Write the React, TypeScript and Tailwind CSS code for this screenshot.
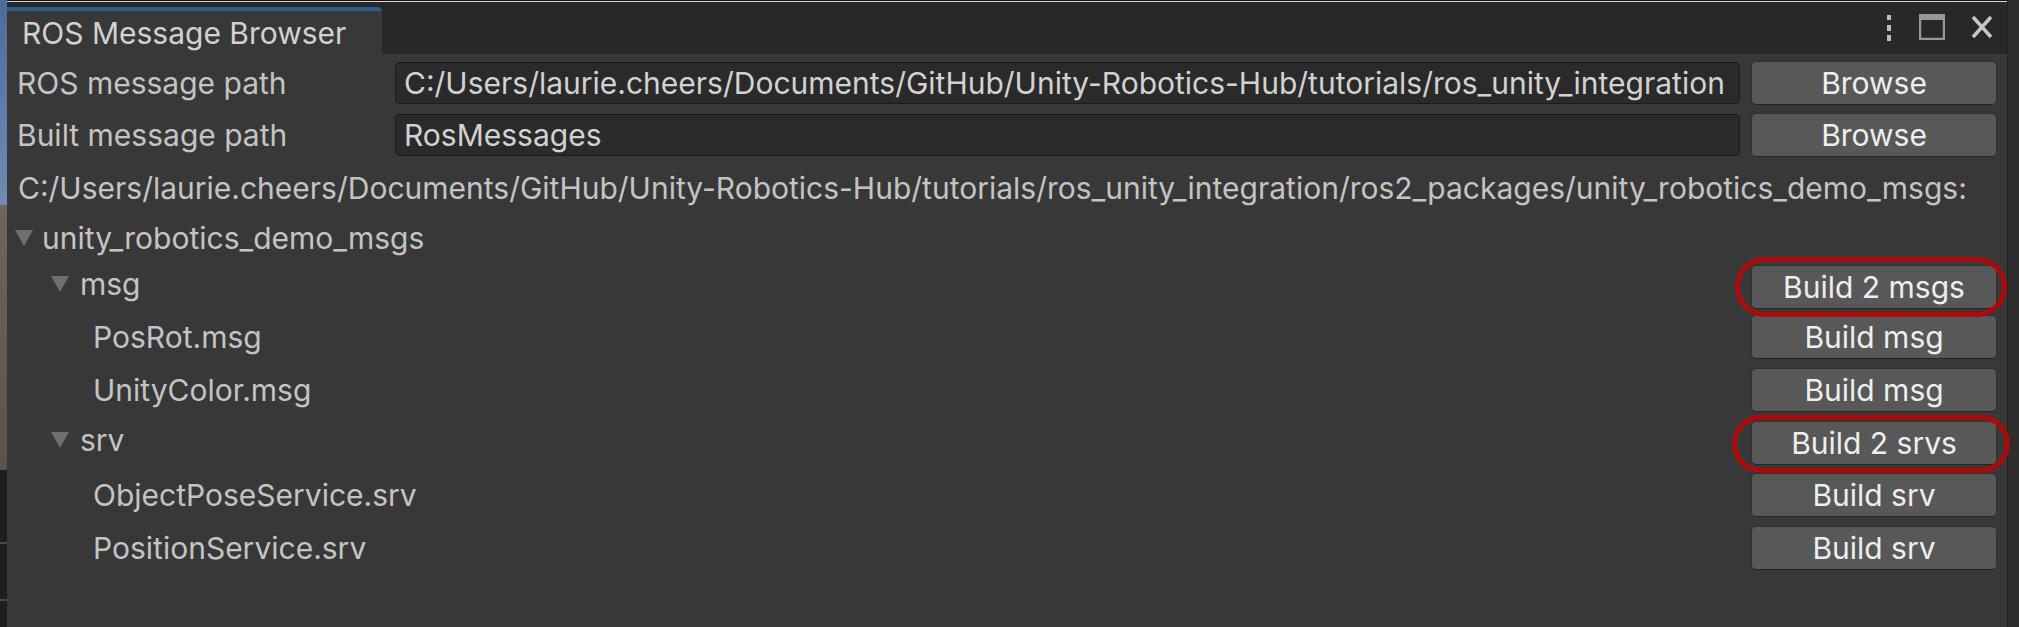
import React from 'react';

const FONT = { fontFamily: 'Inter, "Noto Sans", sans-serif' };

function Triangle() {
  return (
    <svg width="20" height="18" viewBox="0 0 20 18" className="shrink-0">
      <polygon points="1,1 19,1 10,17" fill="#6f6f6f" />
    </svg>
  );
}

function UnityButton({ label }: { label: string }) {
  return (
    <div className="w-[246px] h-[44px] rounded-[5px] bg-[#585858] border border-[#303030] border-b-[#242424] flex items-center justify-center text-[30px] text-[#eeeeee] leading-none">
      {label}
    </div>
  );
}

function Ring({ className }: { className: string }) {
  return <div className={`absolute rounded-full border-[5px] border-[#ad0a0a] pointer-events-none z-10 ${className}`} />;
}

function PathRow({ label, value }: { label: string; value: string }) {
  return (
    <div className="h-[52px] flex items-center">
      <div className="w-[388px] shrink-0 pl-[10px] text-[30px] text-[#c4c4c4] leading-none">{label}</div>
      <div className="flex-1 min-w-0 h-[42px] rounded-[5px] bg-[#2a2a2a] border border-[#1c1c1c] border-t-[#151515] flex items-center pl-[8px] overflow-hidden whitespace-nowrap text-[30px] text-[#d2d2d2] leading-none">
        {value}
      </div>
      <div className="ml-[11px] mr-[10px] shrink-0">
        <UnityButton label="Browse" />
      </div>
    </div>
  );
}

export default function App() {
  const leaves = [
    { section: 'msg', build: 'Build 2 msgs', items: ['PosRot.msg', 'UnityColor.msg'], one: 'Build msg' },
    { section: 'srv', build: 'Build 2 srvs', items: ['ObjectPoseService.srv', 'PositionService.srv'], one: 'Build srv' },
  ];

  return (
    <div className="w-[2019px] h-[627px] flex overflow-hidden bg-[#383838]" style={FONT}>
      {/* desktop behind the window, left side */}
      <div className="w-[7px] flex flex-col shrink-0">
        <div className="h-[205px] bg-gradient-to-b from-[#4a6c9c] to-[#6f8cb6]" />
        <div className="h-[265px] bg-gradient-to-b from-[#6e665d] to-[#5a524c]" />
        <div className="flex-1 bg-[#1e1e1e] flex flex-col">
          <div className="mt-[72px] h-[2px] bg-[#4a4a4a]" />
          <div className="mt-[55px] h-[2px] bg-[#4a4a4a]" />
        </div>
      </div>

      <div className="flex-1 min-w-0 flex flex-col relative">
        <div className="h-[1px] bg-[#111111]" />
        <div className="h-[1px] bg-[#d6d6d6]" />

        {/* tab bar */}
        <div className="h-[52px] bg-[#282828] flex items-end">
          <div className="w-[375px] shrink-0 h-[47px] bg-[#383838] border-t-[4px] border-[#2e5f8e] rounded-tr-[5px] pl-[15px] flex items-center text-[30px] text-[#d2d2d2] leading-none whitespace-nowrap">
            ROS Message Browser
          </div>
          <div className="flex-1" />
          <div className="self-start mt-[12px] mr-[14px] flex items-start gap-[26px]">
            <svg width="8" height="26" viewBox="0 0 8 26" className="mt-[1px]">
              <rect x="2" y="0" width="4" height="5" fill="#bdbdbd" />
              <rect x="2" y="10" width="4" height="6" fill="#bdbdbd" />
              <rect x="2" y="20" width="4" height="6" fill="#bdbdbd" />
            </svg>
            <svg width="26" height="26" viewBox="0 0 26 26">
              <rect x="1" y="1" width="24" height="24" fill="none" stroke="#979797" strokeWidth="2.5" />
              <rect x="1" y="1" width="24" height="5" fill="#979797" />
            </svg>
            <svg width="22" height="24" viewBox="0 0 22 24" className="mt-[1px]">
              <path d="M2 2 L20 22 M20 2 L2 22" stroke="#c6c6c6" strokeWidth="3.5" />
            </svg>
          </div>
        </div>

        {/* content */}
        <div className="flex-1 flex flex-col pt-[3px]">
          <PathRow
            label="ROS message path"
            value="C:/Users/laurie.cheers/Documents/GitHub/Unity-Robotics-Hub/tutorials/ros_unity_integration"
          />
          <PathRow label="Built message path" value="RosMessages" />

          <div className="h-[53px] flex items-center pl-[11px] text-[30px] text-[#c4c4c4] leading-none whitespace-nowrap">
            C:/Users/laurie.cheers/Documents/GitHub/Unity-Robotics-Hub/tutorials/ros_unity_integration/ros2_packages/unity_robotics_demo_msgs:
          </div>

          <div className="h-[48px] flex items-center pl-[7px] gap-[8px] text-[30px] text-[#c4c4c4] leading-none">
            <Triangle />
            <span>unity_robotics_demo_msgs</span>
          </div>

          {leaves.map((group, gi) => (
            <div key={group.section} className="flex flex-col">
              <div className={`${gi === 0 ? 'h-[49px]' : 'h-[53px]'} flex items-center`}>
                <div className="flex-1 flex items-center pl-[43px] gap-[10px] mb-[6px] text-[30px] text-[#c4c4c4] leading-none">
                  <Triangle />
                  <span>{group.section}</span>
                </div>
                <div className="relative mr-[10px] shrink-0">
                  {gi === 0 ? (
                    <Ring className="-left-[16px] -right-[10px] -top-[8px] -bottom-[8px]" />
                  ) : (
                    <Ring className="-left-[19px] -right-[13px] -top-[6px] -bottom-[8px]" />
                  )}
                  <UnityButton label={group.build} />
                </div>
              </div>
              {group.items.map((item, ii) => (
                <div key={item} className={`${ii === 0 ? 'h-[52px]' : 'h-[53px]'} flex items-center`}>
                  <div className="flex-1 pl-[86px] text-[30px] text-[#c4c4c4] leading-none">{item}</div>
                  <div className="mr-[10px] shrink-0">
                    <UnityButton label={group.one} />
                  </div>
                </div>
              ))}
            </div>
          ))}
        </div>
      </div>

      {/* neighbouring panel, right side */}
      <div className="w-[12px] shrink-0 bg-[#2e2e2e] border-l border-[#222222]" />
    </div>
  );
}
